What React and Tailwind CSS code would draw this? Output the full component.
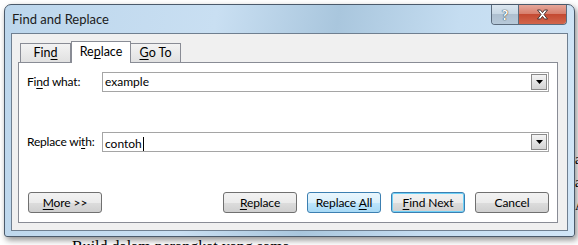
import { useState } from "react";

const uiFont = "font-['Lato','Noto_Sans',sans-serif]";

function DialogButton({ children, kind = "normal" }) {
  const look = {
    normal:
      "border-[#707070] bg-[linear-gradient(#f2f2f2_0%,#ebebeb_50%,#dddddd_50%,#cfcfcf_100%)]",
    hover:
      "border-[#3c7fb1] bg-[linear-gradient(#eaf6fd_0%,#d9f0fc_50%,#bee6fd_50%,#a7d9f5_100%)]",
    default:
      "border-[#3c7fb1] bg-[linear-gradient(#f2f2f2_0%,#ebebeb_50%,#dddddd_50%,#cfcfcf_100%)] shadow-[inset_0_0_0_1px_#6fd1f7]",
  }[kind];

  return (
    <button
      type="button"
      className={`flex h-[21px] w-[74px] items-center justify-center rounded-[3px] border text-[12px] leading-none tracking-[-0.1px] text-black ${look}`}
    >
      {children}
    </button>
  );
}

function Combo({ value, caret }) {
  return (
    <div className="flex h-[20px] flex-1 items-center border border-[#a5a5a5] bg-white">
      <span className="flex-1 pl-[2px] text-[12px] leading-none text-black">
        {value}
        {caret ? <span className="ml-px inline-block h-[14px] w-px translate-y-[3px] bg-black" /> : null}
      </span>
      <div className="m-px flex h-[16px] w-[16px] items-center justify-center border border-[#8a8a8a] bg-[linear-gradient(#f4f4f4,#d4d4d4)]">
        <svg width="7" height="4" viewBox="0 0 7 4">
          <path d="M0 0h7L3.5 4z" fill="#000" />
        </svg>
      </div>
    </div>
  );
}

function Tab({ children, active }) {
  if (active) {
    return (
      <div className="relative z-10 -mb-px flex h-[22px] w-[60px] items-center justify-center border border-b-0 border-[#898c95] bg-white text-[12.5px] text-black">
        {children}
      </div>
    );
  }
  return (
    <div className="-ml-px flex h-[19px] w-[51px] items-center justify-center border border-b-0 border-[#898c95] bg-[linear-gradient(#f3f3f3,#e1e1e1)] pt-px text-[12.5px] text-black first:ml-0">
      {children}
    </div>
  );
}

export default function App() {
  const [findText] = useState("example");
  const [replaceText] = useState("contoh");

  return (
    <div className={`relative h-[245px] w-[578px] overflow-hidden bg-white ${uiFont}`}>
      {/* document text behind the dialog */}
      <div className="absolute left-[72px] top-[239px] font-['Liberation_Serif',serif] text-[16px] leading-none text-black">
        Build dalam perangkat yang sama
      </div>
      <div className="absolute left-[575px] top-[153px] flex flex-col gap-[9px] font-['Liberation_Serif',serif] text-[14px] leading-none text-black">
        <span>a</span>
        <span>a</span>
        <span>A</span>
      </div>

      <div className="relative ml-[4px] mt-[4px] h-[233px] w-[571px] rounded-t-[7px] rounded-b-[3px] border border-[#4b5a6b] bg-[linear-gradient(100deg,#bcd6ec_0%,#c9dff2_35%,#a9c6dd_55%,#c5ddf1_75%,#d2e6f7_100%)] shadow-[2px_3px_6px_rgba(0,0,0,0.45)]">
        <div className="flex h-[28px] items-start">
          <div className="pl-[7px] pt-[5px] text-[13px] text-[#1b1b1b]">Find and Replace</div>
          <div className="ml-auto mr-[7px] flex h-[20px] overflow-hidden rounded-b-[4px] border border-t-0 border-[#5b6b7c]">
            <div className="flex w-[27px] items-center justify-center border-r border-[#5b6b7c] bg-[linear-gradient(#dbe6ef_0%,#c6d6e3_50%,#aebfcf_50%,#b7c9d9_100%)]">
              <span className="text-[14px] font-bold leading-none text-white [text-shadow:0_0_1px_#233,0_0_1px_#233]">?</span>
            </div>
            <div className="flex w-[47px] items-center justify-center bg-[linear-gradient(#e6a79a_0%,#d8806e_45%,#c44a32_50%,#d2664c_100%)]">
              <svg width="13" height="11" viewBox="0 0 13 11">
                <path
                  d="M1.5 1h3l2 2.6L8.5 1h3L8 5.5 11.5 10h-3l-2-2.6L4.5 10h-3L5 5.5z"
                  fill="#fff"
                  stroke="#3a2a2a"
                  strokeWidth="0.9"
                  strokeLinejoin="round"
                />
              </svg>
            </div>
          </div>
        </div>

        <div className="mx-[6px] h-[198px] border border-[#6f7f90] bg-[#f0f0f0] px-[6px] pt-[7px]">
          <div className="flex items-end pl-[2px]">
            <Tab>
              Fin<u className="underline-offset-2">d</u>
            </Tab>
            <Tab active>
              Re<u className="underline-offset-2">p</u>lace
            </Tab>
            <Tab>
              <u className="underline-offset-2">G</u>o To
            </Tab>
          </div>

          <div className="flex h-[161px] w-[540px] flex-col border border-[#898c95] bg-white px-[8px] pt-[9px]">
            <div className="flex items-center">
              <div className="w-[75px] text-[12px] tracking-[-0.2px] text-black">
                Fi<u className="underline-offset-2">n</u>d what:
              </div>
              <Combo value={findText} />
            </div>
            <div className="mt-[40px] flex items-center">
              <div className="w-[75px] text-[12px] tracking-[-0.2px] text-black">
                Replace wi<u className="underline-offset-2">t</u>h:
              </div>
              <Combo value={replaceText} caret />
            </div>

            <div className="mt-[40px] flex items-center pl-px">
              <DialogButton>
                <span>
                  <u className="underline-offset-2">M</u>ore &gt;&gt;
                </span>
              </DialogButton>
              <div className="ml-auto flex gap-[10px]">
                <DialogButton>
                  <span>
                    <u className="underline-offset-2">R</u>eplace
                  </span>
                </DialogButton>
                <DialogButton kind="hover">
                  <span>
                    Replace <u className="underline-offset-2">A</u>ll
                  </span>
                </DialogButton>
                <DialogButton kind="default">
                  <span>
                    <u className="underline-offset-2">F</u>ind Next
                  </span>
                </DialogButton>
                <DialogButton>Cancel</DialogButton>
              </div>
            </div>
          </div>
        </div>
      </div>
    </div>
  );
}
